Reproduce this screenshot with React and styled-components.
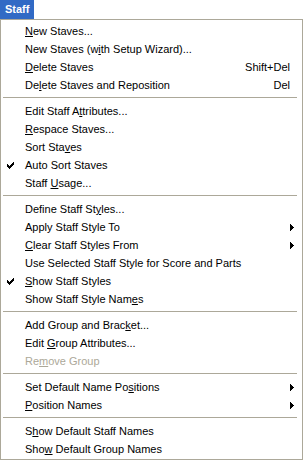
import React from "react";
import styled, { createGlobalStyle } from "styled-components";

const GlobalStyle = createGlobalStyle`
  html, body {
    margin: 0;
    padding: 0;
    background: #ffffff;
  }
  body {
    font-family: "Liberation Sans", Arial, sans-serif;
    font-size: 11px;
    color: #000000;
  }
`;

// menu contents, grouped between separators
const groups = [
  [
    { label: "New Staves...", key: 0 },
    { label: "New Staves (with Setup Wizard)...", key: 13 },
    { label: "Delete Staves", key: 0, shortcut: "Shift+Del" },
    { label: "Delete Staves and Reposition", key: 2, shortcut: "Del" },
  ],
  [
    { label: "Edit Staff Attributes...", key: 12 },
    { label: "Respace Staves...", key: 0 },
    { label: "Sort Staves", key: 8 },
    { label: "Auto Sort Staves", checked: true },
    { label: "Staff Usage...", key: 6 },
  ],
  [
    { label: "Define Staff Styles...", key: 15 },
    { label: "Apply Staff Style To", submenu: true },
    { label: "Clear Staff Styles From", key: 0, submenu: true },
    { label: "Use Selected Staff Style for Score and Parts" },
    { label: "Show Staff Styles", key: 0, checked: true },
    { label: "Show Staff Style Names", key: 20 },
  ],
  [
    { label: "Add Group and Bracket...", key: 18 },
    { label: "Edit Group Attributes...", key: 5 },
    { label: "Remove Group", key: 2, disabled: true },
  ],
  [
    { label: "Set Default Name Positions", key: 19, submenu: true },
    { label: "Position Names", key: 0, submenu: true },
  ],
  [
    { label: "Show Default Staff Names", key: 1 },
    { label: "Show Default Group Names", key: 3 },
  ],
];

const Mnemonic = ({ text, index }) => {
  if (index === undefined) return text;
  return (
    <>
      {text.slice(0, index)}
      <u>{text[index]}</u>
      {text.slice(index + 1)}
    </>
  );
};

const CheckMark = () => (
  <svg width="7" height="7" viewBox="0 0 7 7" shapeRendering="crispEdges">
    <path d="M0 2h1v1h1v1h1v-1h1v-1h1v-1h1v-1h1v3h-1v1h-1v1h-1v1h-1v1h-1v-1h-1v-1h-1v-1h-1z" fill="#000" />
  </svg>
);

const SubArrow = () => (
  <svg width="4" height="7" viewBox="0 0 4 7" shapeRendering="crispEdges">
    <path d="M0 0h1v1h1v1h1v1h1v1h-1v1h-1v1h-1v1h-1z" fill="#000" />
  </svg>
);

const App = () => {
  return (
    <>
      <GlobalStyle />
      <MenuTitle>Staff</MenuTitle>
      <MenuPanel>
        {groups.map((items, gi) => (
          <React.Fragment key={gi}>
            {gi > 0 && <Separator />}
            {items.map((item) => (
              <MenuRow key={item.label} disabled={item.disabled}>
                <CheckCell>{item.checked && <CheckMark />}</CheckCell>
                <Label>
                  <Mnemonic text={item.label} index={item.key} />
                </Label>
                {item.shortcut && <Shortcut>{item.shortcut}</Shortcut>}
                {item.submenu && (
                  <ArrowCell>
                    <SubArrow />
                  </ArrowCell>
                )}
              </MenuRow>
            ))}
          </React.Fragment>
        ))}
      </MenuPanel>
    </>
  );
};

export default App;

const MenuTitle = styled.div`
  display: inline-block;
  vertical-align: top;
  height: 19px;
  line-height: 18px;
  padding: 0 5px 0 5px;
  background: #316ac5;
  color: #ffffff;
  font-weight: bold;
`;

const MenuPanel = styled.div`
  width: 303px;
  box-sizing: border-box;
  border: 1px solid #aca899;
  padding: 2px 0 1px 0;
  background: #ffffff;
`;

const MenuRow = styled.div`
  display: flex;
  align-items: center;
  height: 18px;
  padding-right: 12px;
  white-space: nowrap;
  color: ${(props) => (props.disabled ? "#aca899" : "#000000")};
`;

const CheckCell = styled.div`
  width: 24px;
  flex: 0 0 24px;
  display: flex;
  align-items: center;
  padding-left: 6px;
  box-sizing: border-box;
`;

const Label = styled.span`
  flex: 1;
`;

const Shortcut = styled.span`
  margin-left: 16px;
`;

const ArrowCell = styled.span`
  display: flex;
  align-items: center;
  margin-right: -4px;
`;

const Separator = styled.div`
  height: 1px;
  margin: 3px 5px 4px 2px;
  background: #aca899;
`;
